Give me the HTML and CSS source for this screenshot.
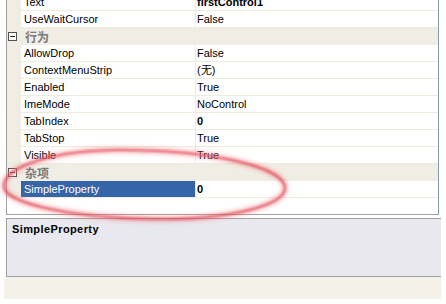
FILE: index.html
```html
<!DOCTYPE html>
<html lang="zh-cn">
<head>
    <meta charset="UTF-8">
    <title>属性</title>
    <link rel="stylesheet" href="styles.css">
</head>
<body>
    <div class="sheet">
        <!-- 属性列表 -->
        <div class="grid">
            <div class="rows">
                <div class="row"><span class="gutter"></span><span class="name">Text</span><span class="value bold">firstControl1</span></div>
                <div class="row"><span class="gutter"></span><span class="name">UseWaitCursor</span><span class="value">False</span></div>
                <div class="cat"><span class="gutter"><i class="toggle"></i></span><span class="cat-name">行为</span></div>
                <div class="row"><span class="gutter"></span><span class="name">AllowDrop</span><span class="value">False</span></div>
                <div class="row"><span class="gutter"></span><span class="name">ContextMenuStrip</span><span class="value">(无)</span></div>
                <div class="row"><span class="gutter"></span><span class="name">Enabled</span><span class="value">True</span></div>
                <div class="row"><span class="gutter"></span><span class="name">ImeMode</span><span class="value">NoControl</span></div>
                <div class="row"><span class="gutter"></span><span class="name">TabIndex</span><span class="value bold">0</span></div>
                <div class="row"><span class="gutter"></span><span class="name">TabStop</span><span class="value">True</span></div>
                <div class="row"><span class="gutter"></span><span class="name">Visible</span><span class="value">True</span></div>
                <div class="cat"><span class="gutter"><i class="toggle"></i></span><span class="cat-name">杂项</span></div>
                <div class="row selected"><span class="gutter"></span><span class="name">SimpleProperty</span><span class="value bold">0</span></div>
            </div>
        </div>

        <!-- 说明面板 -->
        <div class="desc"><b>SimpleProperty</b></div>
        <div class="strip"></div>
    </div>

    <!-- 红色圈注 -->
    <svg class="mark" width="446" height="304" viewBox="0 0 446 304">
        <defs>
            <filter id="soft" x="-10%" y="-30%" width="120%" height="160%">
                <feGaussianBlur stdDeviation="2.2"/>
            </filter>
            <filter id="soft2" x="-10%" y="-30%" width="120%" height="160%">
                <feGaussianBlur stdDeviation="0.8"/>
            </filter>
        </defs>
        <path d="M 4 186 C 4 166, 56 150, 120 150 C 211 150, 285 167, 285 188 C 285 205, 231 219, 165 219 C 76 219, 4 204, 4 186 Z" fill="none" stroke="#f08088" stroke-width="6" opacity="0.5" filter="url(#soft)"/>
        <path d="M 4 186 C 4 166, 56 150, 120 150 C 211 150, 285 167, 285 188 C 285 205, 231 219, 165 219 C 76 219, 4 204, 4 186 Z" fill="none" stroke="#e0404c" stroke-width="2.2" opacity="0.75" filter="url(#soft2)"/>
    </svg>
</body>
</html>
```

FILE: styles.css
```css
body {
    margin: 0;
    width: 446px;
    height: 304px;
    overflow: hidden;
    position: relative;
    background: #fff;
    font-family: "Liberation Sans", Arial, sans-serif;
    font-size: 11px;
    color: #000;
}
.sheet {
    padding-left: 6px;
}
.grid {
    width: 433px;
    height: 215px;
    box-sizing: border-box;
    border-left: 1px solid #a0a0a0;
    border-right: 1px solid #7f9db9;
    border-bottom: 1px solid #a0a0a0;
    overflow: hidden;
    background: #fff;
}
.rows {
    margin-top: -6px;
}
.row, .cat {
    display: flex;
    height: 17px;
}
.gutter {
    flex: none;
    width: 14px;
    background: #f0ede4;
}
.name {
    flex: none;
    width: 175px;
    box-sizing: border-box;
    padding-left: 3px;
    line-height: 16px;
    border-bottom: 1px solid #ecebdd;
    border-right: 1px solid #ecebdd;
    white-space: nowrap;
}
.value {
    flex: 1;
    padding-left: 1px;
    line-height: 16px;
    border-bottom: 1px solid #ecebdd;
    white-space: nowrap;
}
.bold {
    font-weight: bold;
}
.selected .name {
    background: #3565a8;
    color: #fff;
}
.cat {
    background: #f0ede4;
    align-items: center;
}
.cat .gutter {
    display: flex;
    align-items: center;
    height: 17px;
}
.toggle {
    position: relative;
    width: 9px;
    height: 9px;
    margin-left: 1px;
    margin-top: -1px;
    box-sizing: border-box;
    border: 1px solid #505050;
    background: #fff;
}
.toggle::after {
    content: "";
    position: absolute;
    left: 1px;
    top: 3px;
    width: 5px;
    height: 1px;
    background: #202020;
}
.cat-name {
    padding-left: 4px;
    font-family: "Noto Sans CJK SC", "Liberation Sans", sans-serif;
    font-size: 12px;
    font-weight: bold;
    color: #7a7a7a;
    line-height: 16px;
}
.desc {
    width: 435px;
    height: 59px;
    margin-top: 3px;
    box-sizing: border-box;
    border: 1px solid #a0a0a0;
    border-right: none;
    background: #e9e8ee;
    padding: 4px 5px;
}
.desc b {
    font-size: 11px;
    letter-spacing: 0.4px;
    line-height: 13px;
}
.strip {
    width: 437px;
    height: 22px;
    margin-left: -2px;
    background: #f3f1e8;
}
.mark {
    position: absolute;
    left: 0;
    top: 0;
    pointer-events: none;
}
```
